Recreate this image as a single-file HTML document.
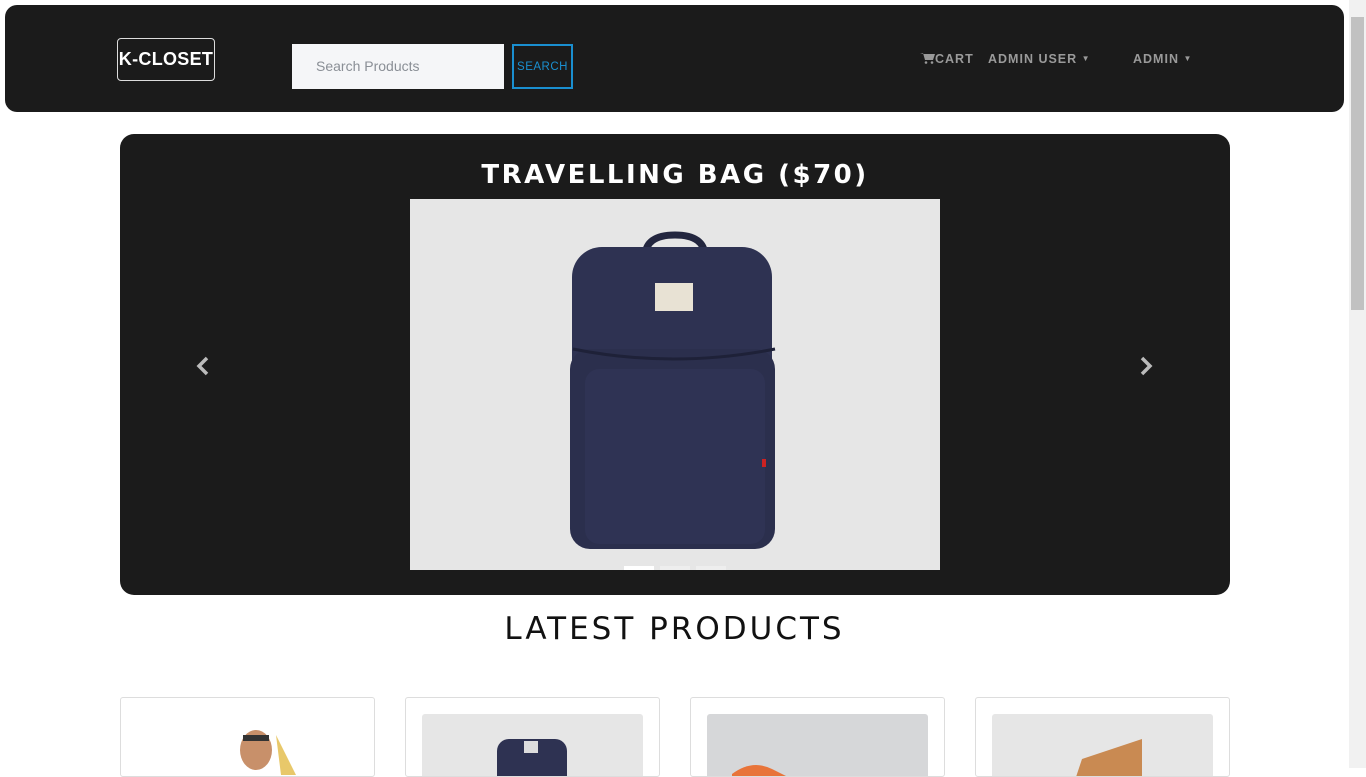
<!DOCTYPE html>
<html><head><meta charset="utf-8"><style>
*{box-sizing:border-box;margin:0;padding:0}
html,body{width:1366px;height:768px;overflow:hidden;background:#fff;font-family:"Liberation Sans","DejaVu Sans",sans-serif}
.sb{position:absolute;left:1349px;top:0;width:17px;height:768px;background:#f1f1f1}
.sb .th{position:absolute;left:2px;top:17px;width:13px;height:293px;background:#c1c1c1}
.nav{position:absolute;left:5px;top:5px;width:1339px;height:107px;background:#1b1b1b;border-radius:12px}
.logo{position:absolute;left:117px;top:38px;width:98px;height:43px;border:1px solid #ddd;border-radius:4px;color:#fff;font-weight:bold;font-size:18px;line-height:41px;text-align:center;letter-spacing:0.3px}
.search{position:absolute;left:292px;top:44px;width:212px;height:45px;background:#f5f6f8;color:#8a8f96;font-size:14px;line-height:45px;padding-left:24px}
.sbtn{position:absolute;left:512px;top:44px;width:61px;height:45px;border:2px solid #1a8fd0;color:#1a8fd0;font-size:11.5px;line-height:43px;text-align:center;letter-spacing:0.5px}
.nl{position:absolute;top:52px;color:#9a9a9a;font-size:12.5px;font-weight:bold;letter-spacing:1px}
.car{position:absolute;left:120px;top:134px;width:1110px;height:461px;background:#1b1b1b;border-radius:14px}
.ct{position:absolute;left:0;width:100%;top:26px;text-align:center;color:#fff;font-size:26px;letter-spacing:2.5px;font-family:"DejaVu Sans",sans-serif;font-weight:600}
.img{position:absolute;left:290px;top:65px;width:530px;height:371px;background:#e6e6e6;overflow:hidden}
.h2{position:absolute;left:0;width:1349px;top:611px;text-align:center;font-size:31px;letter-spacing:3px;color:#111;font-family:"DejaVu Sans",sans-serif}
.card{position:absolute;top:697px;width:255px;height:80px;border:1px solid #ddd;border-radius:3px;overflow:hidden;background:#fff}
.card .p{position:absolute;left:16px;top:16px;width:221px;height:80px;background:#e6e6e6;border-radius:3px}
</style></head><body>
<div class="nav"></div>
<div class="logo">K-CLOSET</div>
<div class="search">Search Products</div>
<div class="sbtn">SEARCH</div>
<div class="nl" style="left:920px"><svg width="15" height="12" viewBox="0 0 15 12" style="vertical-align:-1px"><path d="M0 1h3l2 7h8l2-6H4" fill="#9a9a9a"/><circle cx="6" cy="10.5" r="1.3" fill="#9a9a9a"/><circle cx="12" cy="10.5" r="1.3" fill="#9a9a9a"/></svg>CART</div>
<div class="nl" style="left:988px">ADMIN USER <span style="font-size:8px;vertical-align:2px">▼</span></div>
<div class="nl" style="left:1133px">ADMIN <span style="font-size:8px;vertical-align:2px">▼</span></div>
<div class="car">
<div class="ct">TRAVELLING BAG ($70)</div>
<div class="img"><svg width="530" height="371" viewBox="0 0 530 371">
<path d="M235 58q0-22 30-22t30 22" fill="none" stroke="#23263f" stroke-width="7"/>
<rect x="162" y="48" width="200" height="150" rx="30" fill="#2e3252"/>
<rect x="160" y="150" width="205" height="200" rx="20" fill="#2b2f4d"/>
<rect x="175" y="170" width="180" height="175" rx="14" fill="#2f3354"/>
<path d="M163 150q100 20 202 0" stroke="#1e2138" stroke-width="3" fill="none"/>
<rect x="245" y="84" width="38" height="28" fill="#e8e2d4"/>
<rect x="352" y="260" width="4" height="8" fill="#c22"/>
</svg>
<div style="position:absolute;left:214px;top:367px;width:30px;height:4px;background:#fff"></div>
<div style="position:absolute;left:250px;top:367px;width:30px;height:4px;background:#eee"></div>
<div style="position:absolute;left:286px;top:367px;width:30px;height:4px;background:#eee"></div>
</div>
<svg style="position:absolute;left:76px;top:222px" width="14" height="20" viewBox="0 0 14 20"><path d="M11 2 3 10l8 8" stroke="#bbb" stroke-width="3.5" fill="none"/></svg>
<svg style="position:absolute;left:1019px;top:222px" width="14" height="20" viewBox="0 0 14 20"><path d="M3 2l8 8-8 8" stroke="#bbb" stroke-width="3.5" fill="none"/></svg>
</div>
<div class="h2">LATEST PRODUCTS</div>
<div class="card" style="left:120px"><svg style="position:absolute;left:80px;top:22px" width="100" height="60"><ellipse cx="55" cy="30" rx="16" ry="20" fill="#c8906a"/><rect x="42" y="15" width="26" height="6" fill="#333"/><path d="M75 15l20 40h-15z" fill="#e8c86a"/></svg></div>
<div class="card" style="left:405px"><div class="p"><svg style="position:absolute;left:70px;top:15px" width="80" height="60"><rect x="5" y="10" width="70" height="60" rx="12" fill="#2e3252"/><rect x="32" y="12" width="14" height="12" fill="#ddd"/></svg></div></div>
<div class="card" style="left:690px"><div class="p" style="background:#d6d7d9"><svg style="position:absolute;left:20px;top:40px" width="80" height="40"><path d="M5 20q20-15 40-5t20 10v20H5z" fill="#e8743a"/></svg></div></div>
<div class="card" style="left:975px"><div class="p"><svg style="position:absolute;left:60px;top:15px" width="100" height="60"><path d="M30 30l60-20v50H20z" fill="#c98a52"/></svg></div></div>
<div class="sb"><div class="th"></div></div>
</body></html>
